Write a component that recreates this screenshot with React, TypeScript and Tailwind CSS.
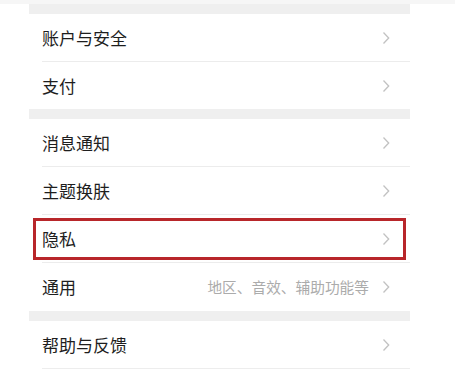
import React from "react";

const Chevron = () => (
  <svg width="8" height="14" viewBox="0 0 8 14" className="shrink-0">
    <polyline points="1.5,1.5 6.7,7 1.5,12.5" fill="none" stroke="#c2c2c2" strokeWidth="1.3" />
  </svg>
);

type RowProps = { label: string; sub?: string; highlight?: boolean; last?: boolean };

const Row = ({ label, sub, highlight, last }: RowProps) => (
  <div className="relative">
    <div className="flex h-[47px] items-center pl-[13px] pr-[20px]">
      <span className="flex-1 text-[17px] text-[#1e1e1e]">{label}</span>
      {sub && <span className="mr-[15px] text-[15px] text-[#ababab]">{sub}</span>}
      <Chevron />
    </div>
    <div className={last ? "ml-[13px] h-px bg-[#ededed]" : "ml-[13px] h-px bg-[#ececec]"} />
    {highlight && (
      <div className="absolute left-[4px] right-[4px] top-[3px] bottom-[3px] border-[3px] border-[#b8262a]" />
    )}
  </div>
);

const Band = () => <div className="h-[10px] bg-[#efefef]" />;

export default function App() {
  return (
    <div
      className="w-[455px] h-[371px] overflow-hidden bg-white"
      style={{ fontFamily: '"Noto Sans CJK SC", "Noto Sans", sans-serif' }}
    >
      <div className="h-[4px] bg-[#f6f6f6]" />
      <div className="ml-[29px] w-[381px]">
        <Band />
        <div className="flex h-[47px] items-center pl-[13px] pr-[20px]">
          <span className="flex-1 text-[17px] text-[#1e1e1e]">账户与安全</span>
          <Chevron />
        </div>
        <div className="ml-[13px] h-px bg-[#ececec]" />
        <div className="flex h-[47px] items-center pl-[13px] pr-[20px]">
          <span className="flex-1 text-[17px] text-[#1e1e1e]">支付</span>
          <Chevron />
        </div>
        <Band />
        <Row label="消息通知" />
        <Row label="主题换肤" />
        <Row label="隐私" highlight />
        <div className="flex h-[48px] items-center pl-[13px] pr-[20px]">
          <span className="flex-1 text-[17px] text-[#1e1e1e]">通用</span>
          <span className="mr-[13px] text-[14.7px] text-[#ababab]">地区、音效、辅助功能等</span>
          <Chevron />
        </div>
        <Band />
        <Row label="帮助与反馈" last />
      </div>
    </div>
  );
}
